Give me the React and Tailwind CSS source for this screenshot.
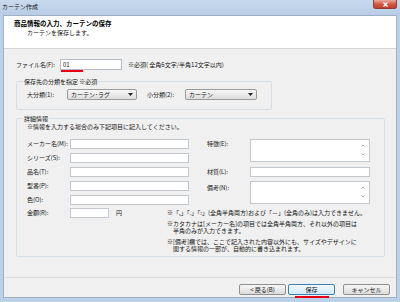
// App.jsx - カーテン作成 dialog
const Arrow = () => (
  <svg width="5" height="3" viewBox="0 0 5 3">
    <polygon points="0,0 5,0 2.5,3" fill="#222" />
  </svg>
)

const Field = ({ w = 'w-[119px]' }) => (
  <div className={`${w} h-[10px] bg-white border border-[#c3c8cf]`} />
)

const Area = () => (
  <div className="w-[120px] h-[23px] bg-white border border-[#c3c8cf] flex justify-end pr-[4px] pt-[4px]">
    <div className="flex flex-col justify-between h-[12px]">
      <svg width="4" height="3" viewBox="0 0 4 3"><polyline points="0.5,2.5 2,1 3.5,2.5" fill="none" stroke="#9a9a9a" strokeWidth="0.8" /></svg>
      <svg width="4" height="3" viewBox="0 0 4 3"><polyline points="0.5,0.5 2,2 3.5,0.5" fill="none" stroke="#9a9a9a" strokeWidth="0.8" /></svg>
    </div>
  </div>
)

const Select = ({ w, text }) => (
  <div className={`${w} h-[11px] flex items-center justify-between px-[3px] rounded-[2px] border border-[#9a9a9a] bg-linear-to-b from-[#f7f7f7] to-[#dcdcdc]`}>
    <span className="whitespace-nowrap">{text}</span>
    <Arrow />
  </div>
)

export default function App() {
  const left = ['メーカー名(M):', 'シリーズ(S):', '品名(T):', '型番(P):', '色(O):']

  return (
    <div className="w-[400px] h-[302px] flex flex-col bg-[#bcd0e8] font-['Noto_Sans_CJK_JP','Noto_Sans',sans-serif] text-[6px] leading-[7px] text-[#151515]">
      {/* Title bar */}
      <div className="h-[15px] flex items-start justify-between bg-linear-to-b from-[#c8daee] to-[#b8cce5]">
        <span className="pl-[2px] pt-[3px] text-[#111]">カーテン作成</span>
        <div className="w-[24px] h-[9px] mr-[3px] flex items-center justify-center rounded-b-[3px] border border-t-0 border-[#8e3b30] bg-linear-to-b from-[#e9a99b] via-[#d25a47] to-[#c0402c]">
          <svg width="5" height="5" viewBox="0 0 5 5">
            <path d="M0.5 0.5 L4.5 4.5 M4.5 0.5 L0.5 4.5" stroke="#fff" strokeWidth="1.3" />
          </svg>
        </div>
      </div>

      {/* Client */}
      <div className="flex-1 mx-[3px] mb-[4px] flex flex-col bg-[#f0f0f0] border border-[#9fb0c5]">
        {/* Header */}
        <div className="h-[33px] bg-white border-b border-[#d6d6d6] pl-[10px] pt-[4px]">
          <div className="font-bold text-[6.5px] leading-[7px] text-black">商品情報の入力、カーテンの保存</div>
          <div className="pl-[13px] mt-[2px]">カーテンを保存します。</div>
        </div>

        {/* Body */}
        <div className="flex-1 px-[12px]">
          {/* file name */}
          <div className="mt-[10px] flex items-center">
            <span className="w-[44px] whitespace-nowrap">ファイル名(F):</span>
            <div className="relative">
              <div className="w-[62px] h-[11px] bg-white border border-[#b5bcc6] pl-[2px] flex items-center">01</div>
              <span className="absolute left-[1px] -bottom-[2px] w-[22px] h-[2px] bg-[#e60012]" />
            </div>
            <span className="ml-[6px] whitespace-nowrap">※必須( 全角6文字/半角12文字以内)</span>
          </div>

          {/* group 1 */}
          <fieldset className="mt-[8px] w-[256px] border border-[#d5dfe5] rounded-[2px] pl-[10px] pb-[9px]">
            <legend className="ml-[-4px] px-[1px] leading-[7px]">保存先の分類を指定 ※必須</legend>
            <div className="mt-[4px] flex items-center">
              <span className="w-[40px]">大分類(1):</span>
              <Select w="w-[70px]" text="カーテン･ラグ" />
              <span className="w-[38px] ml-[10px]">小分類(2):</span>
              <Select w="w-[72px]" text="カーテン" />
            </div>
          </fieldset>

          {/* group 2 */}
          <fieldset className="mt-[5px] w-[369px] border border-[#d5dfe5] rounded-[2px] pl-[10px] pb-[4px]">
            <legend className="ml-[-4px] px-[1px] leading-[7px]">詳細情報</legend>
            <div className="mt-[1px]">※情報を入力する場合のみ下記項目に記入してください。</div>

            <div className="mt-[9px] flex">
              <div className="w-[162px] flex flex-col">
                {left.map((l) => (
                  <div key={l} className="h-[14px] flex items-start">
                    <span className="w-[43px] whitespace-nowrap pt-[1px]">{l}</span>
                    <Field />
                  </div>
                ))}
              </div>
              <div className="ml-[18px] flex flex-col">
                <div className="h-[28px] flex items-start">
                  <span className="w-[43px] pt-[1px]">特徴(E):</span>
                  <Area />
                </div>
                <div className="h-[14px] flex items-start">
                  <span className="w-[43px] pt-[1px]">材質(L):</span>
                  <Field w="w-[120px]" />
                </div>
                <div className="flex items-start">
                  <span className="w-[43px] pt-[3px]">備考(N):</span>
                  <Area />
                </div>
              </div>
            </div>

            <div className="-mt-[1px] flex items-start">
              <div className="w-[140px] flex items-start">
                <span className="w-[43px] pt-[1px]">金額(R):</span>
                <Field w="w-[39px]" />
                <span className="ml-[7px] pt-[1px]">円</span>
              </div>
              <div className="pt-[1px] whitespace-nowrap">
                <div>※「,」「.」「:」(全角半角両方)および「－」(全角のみ)は入力できません。</div>
                <div className="mt-[4px]">※カタカナは[メーカー名]の項目では全角半角両方、それ以外の項目は</div>
                <div className="pl-[6px]">半角のみが入力できます。</div>
                <div className="mt-[4px]">※[備考]欄では、ここで記入された内容以外にも、サイズやデザインに</div>
                <div className="pl-[6px]">関する情報の一部が、自動的に書き込まれます。</div>
              </div>
            </div>
          </fieldset>
        </div>

        {/* Buttons */}
        <div className="h-[20px] border-t border-[#dcdcdc] flex justify-end items-start pt-[6px] pr-[6px]">
          <button className="w-[47px] h-[11px] flex items-center justify-center rounded-[2px] border border-[#8e8f8f] bg-linear-to-b from-[#f6f6f6] to-[#dcdcdc] text-[6px] leading-[7px]">
            &lt; 戻る(B)
          </button>
          <div className="relative ml-[2px]">
            <button className="w-[47px] h-[11px] flex items-center justify-center rounded-[2px] border border-[#3c7fb1] bg-linear-to-b from-[#f2f9fd] to-[#d3eaf8] text-[6px] leading-[7px]">
              保存
            </button>
            <span className="absolute left-[7px] -bottom-[3px] w-[34px] h-[2px] bg-[#e60012]" />
          </div>
          <button className="ml-[8px] w-[47px] h-[11px] flex items-center justify-center rounded-[2px] border border-[#8e8f8f] bg-linear-to-b from-[#f6f6f6] to-[#dcdcdc] text-[6px] leading-[7px]">
            キャンセル
          </button>
        </div>
      </div>
    </div>
  )
}
